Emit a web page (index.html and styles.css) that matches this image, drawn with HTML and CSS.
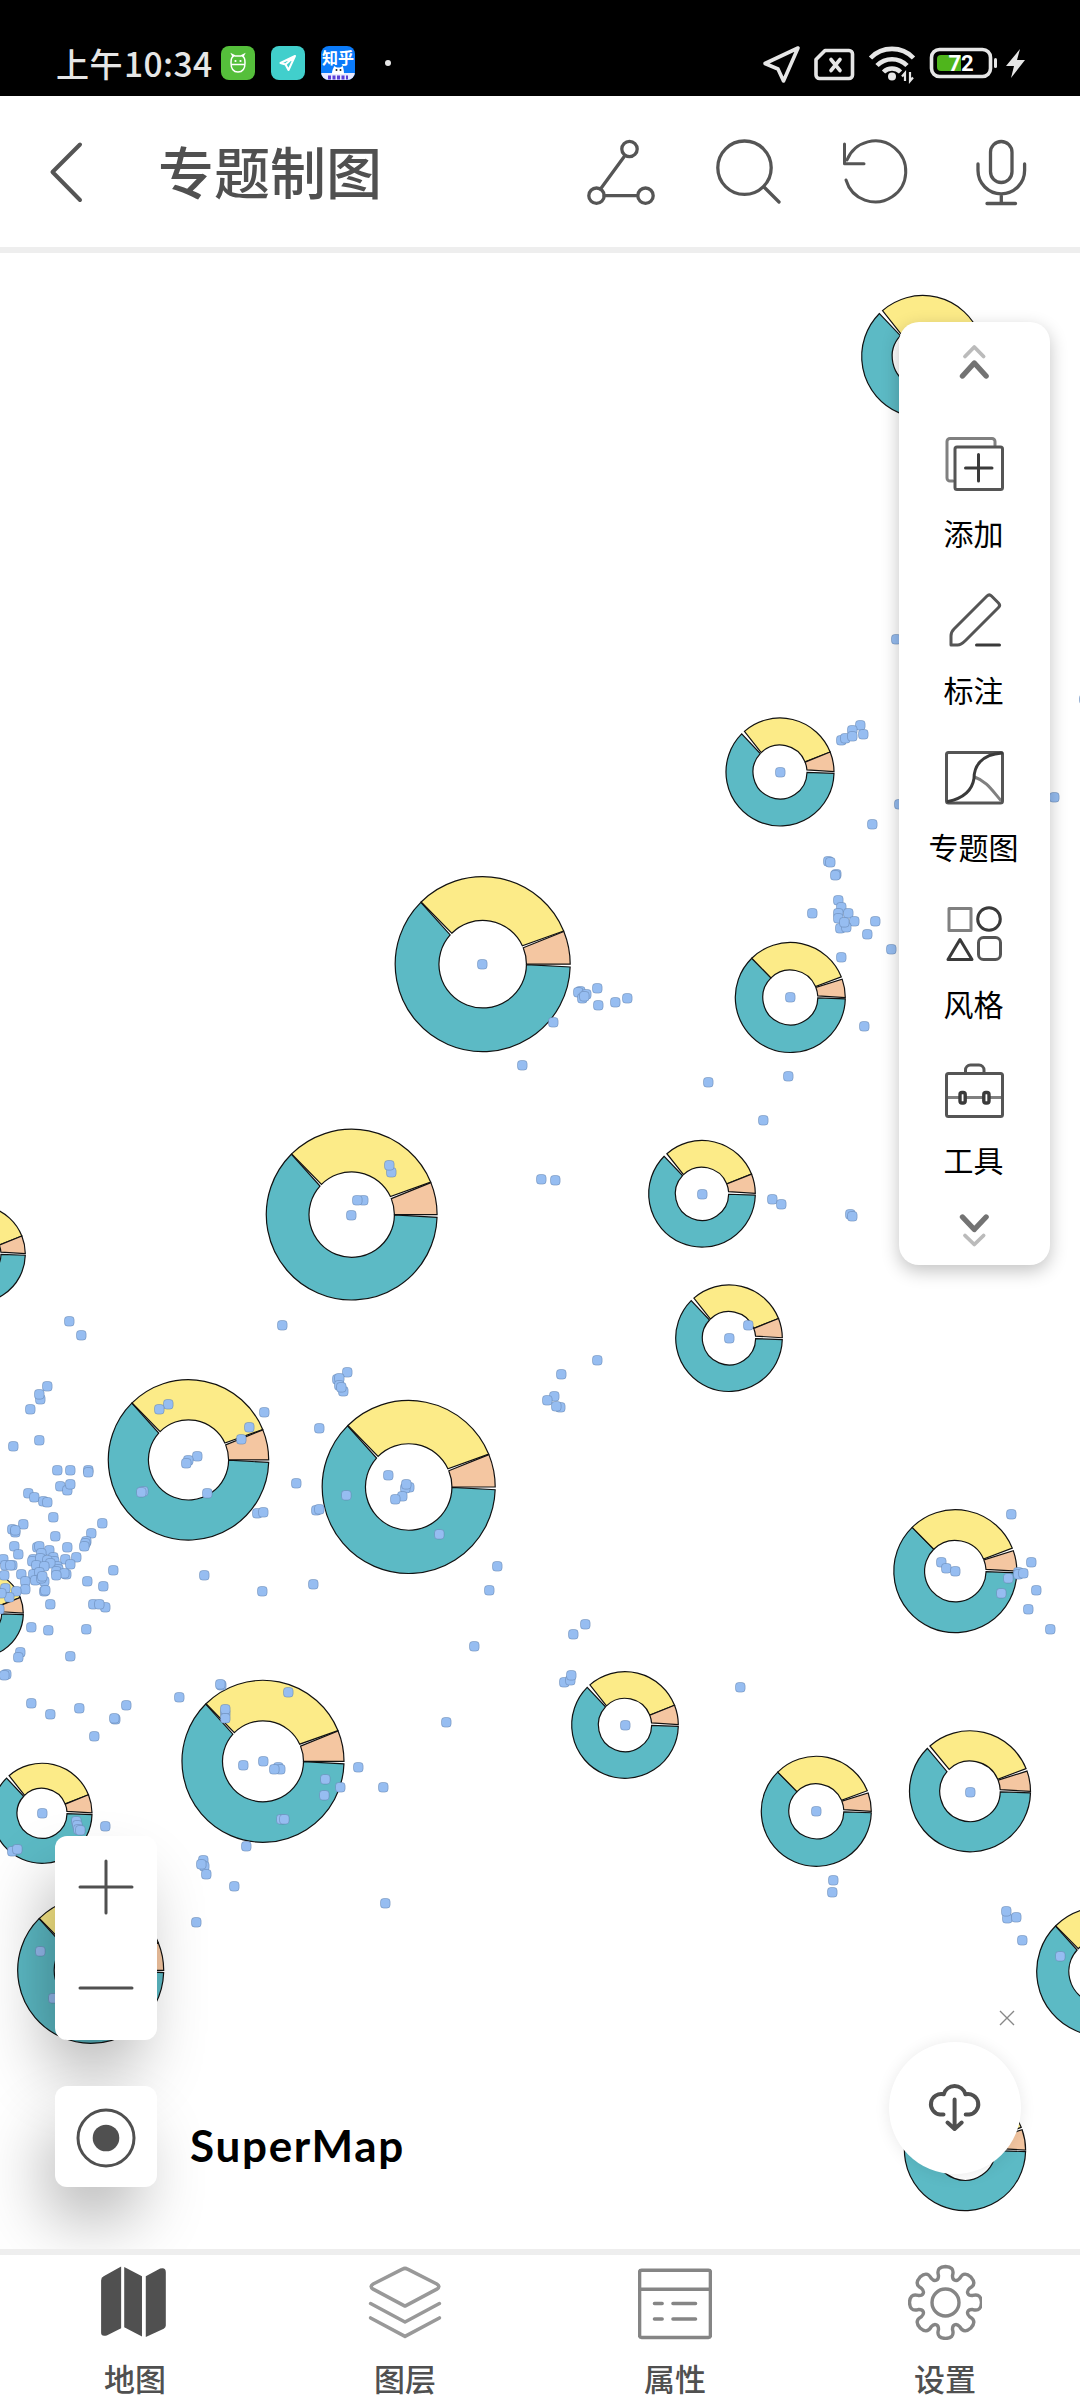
FILE: index.html
```html
<!DOCTYPE html>
<html lang="zh-CN">
<head>
<meta charset="utf-8">
<title>专题制图</title>
<link rel="stylesheet" href="styles.css">
</head>
<body>
<div class="status">
  <div class="status-left">
    <span class="clock"><span class="ampm">上午</span>10:34</span>
    <svg class="app-icon" viewBox="0 0 34 34"><rect width="34" height="34" rx="8" fill="#55bf3b"/><path d="M10 17c0-4 1-6 2-6.500l-1-2 3 1.500h6l3-1.500-1 2c1 .5 2 2.500 2 6.500 0 6-3 9-7 9s-7-3-7-9zM10 18.500h14" fill="none" stroke="#fff" stroke-width="1.500"/><circle cx="14.500" cy="15" r="1.100" fill="#fff"/><circle cx="19.500" cy="15" r="1.100" fill="#fff"/></svg>
    <svg class="app-icon" viewBox="0 0 34 34"><rect width="34" height="34" rx="8" fill="#41cfcc"/><path d="M24 10 9.500 17l5 1.500L17.500 24zM14.500 18.500 24 10" fill="none" stroke="#fff" stroke-width="2" stroke-linejoin="round"/></svg>
    <svg class="app-icon" viewBox="0 0 34 34"><clipPath id="zc"><rect width="34" height="34" rx="8"/></clipPath><g clip-path="url(#zc)"><rect width="34" height="34" fill="#0b7bfa"/><rect y="27" width="34" height="7" fill="#e9eaff"/><path d="M11 28c0-5 2-6 2-8l3 1.500h3l3-1.500c0 2 1 3 1 8z" fill="#fff"/><path d="M7 31.500h20" stroke="#5b3fd6" stroke-width="4" stroke-dasharray="3 1.500"/><circle cx="15.500" cy="24" r="1" fill="#222"/><circle cx="19.500" cy="24" r="1" fill="#222"/></g><text x="17" y="18" text-anchor="middle" class="zhihu">知乎</text></svg>
    <span class="more-dot"></span>
  </div>
  <svg class="status-right" viewBox="760 40 270 46">
    <g fill="none" stroke="#e6e6e6" stroke-width="3.600" stroke-linejoin="round" stroke-linecap="round">
      <path d="M798 48 765 63.500l13 5.500 5.500 12z"/>
      <path d="M825 50.500h24a3.500 3.500 0 0 1 3.500 3.500v21a3.500 3.500 0 0 1-3.500 3.500h-29.500a3.500 3.500 0 0 1-3.500-3.500V59.500z"/>
      <path d="m831 59.500 9 11M840 59.500l-9 11"/>
      <rect x="931.500" y="49.500" width="59" height="27" rx="8"/>
    </g>
    <g fill="none" stroke="#e6e6e6" stroke-width="4.600">
      <path d="M870.500 58a30 30 0 0 1 43 0M877 65.500a21 21 0 0 1 30 0M883.500 72a12 12 0 0 1 17 0"/>
    </g>
    <circle cx="892" cy="76.500" r="4" fill="#e6e6e6"/>
    <path d="M905 81v-8l-3 3.500M910 72v9l3-3.500" stroke="#e6e6e6" stroke-width="2.200" fill="none"/>
    <path d="M941 55h20v16h-20a4 4 0 0 1-4-4v-8a4 4 0 0 1 4-4z" fill="#4fb51c"/>
    <rect x="994" y="58" width="3" height="10" rx="1.500" fill="#e6e6e6"/>
    <path d="M1020 49 1006 66h8l-3 12 14-18h-8z" fill="#e6e6e6"/>
    <text x="961" y="71" text-anchor="middle" class="battery">72</text>
  </svg>
</div>

<header class="header">
  <svg class="back" viewBox="46 138 40 66"><path d="M80 143.500 52.500 171 80 199"/></svg>
  <h1 class="title">专题制图</h1>
  <svg class="actions" viewBox="580 130 460 84">
    <circle cx="629.500" cy="149" r="7.700"/><circle cx="596.500" cy="195.700" r="7.700"/><circle cx="645.500" cy="195.700" r="7.700"/>
    <path d="M625 155.500 600.500 189M604 195.700h33.500"/>
    <circle cx="744.500" cy="167.700" r="26.700"/><path d="m764 187 15 15"/>
    <path d="M846 180a30.500 30.500 0 1 0 1-20M844.500 144v19.700h19.500" class="thin"/>
    <rect x="990.500" y="141.500" width="21.500" height="41" rx="10.750"/><path d="M978 164v6.500a23.300 23.300 0 0 0 46.600 0V164M1001.300 194v9.500M987 203.500h28.500"/>
  </svg>
</header>

<main class="map">
  <svg class="map-canvas" id="map" viewBox="0 253 1080 1996"></svg>

  <aside class="tools">
    <svg class="chevrons" viewBox="954 340 40 42"><path class="far" d="m965 356.500 9.300-9.500 9.300 9.500"/><path class="near" d="m962.500 376 11.800-13 11.800 13"/></svg>
    <div class="tool-list">
      <div class="tool">
        <svg viewBox="944 434.500 60 60"><path class="mid" d="M953 481.500h-3a3 3 0 0 1-3-3V442a3 3 0 0 1 3-3h42a3 3 0 0 1 3 3v4"/><rect x="955" y="447.500" width="47.500" height="42.500" rx="2"/><path class="dark" d="M965.500 468.500h26.500M978.500 455v26.500"/></svg>
        <span>添加</span>
      </div>
      <div class="tool">
        <svg viewBox="944 591 60 60"><path d="M951 645v-9c0-3 1-5 3-7l33-33c1.500-1.500 3-1.500 4.500 0l7 7c1.500 1.500 1.500 3 0 4.500l-33 33c-2.500 2.500-5 4.500-8 4.500z"/><path class="dark" d="M976.500 645h23"/></svg>
        <span>标注</span>
      </div>
      <div class="tool">
        <svg viewBox="944 748 60 60"><path class="mid" d="M974.500 777c12 4 18 14 26 23"/><rect x="946.500" y="752.500" width="56" height="50.500" rx="2"/><path class="dark" d="M948 801.500c14-3 24-10 26-23 0-12 7-24 28-25.500"/></svg>
        <span>专题图</span>
      </div>
      <div class="tool">
        <svg viewBox="944 905 60 60"><rect class="mid" x="949" y="909.500" width="22" height="22"/><circle class="dark" cx="989" cy="920" r="11.300"/><path class="dark" d="m960 940.500 12 20h-24z"/><rect x="978.500" y="938.500" width="22" height="22" rx="5"/></svg>
        <span>风格</span>
      </div>
      <div class="tool">
        <svg viewBox="944 1062 60 60"><path class="mid" d="M948 1098.500h53"/><rect x="946.500" y="1074.500" width="56" height="43" rx="2"/><path d="M965.500 1074v-3a5 5 0 0 1 5-5h8.500a5 5 0 0 1 5 5v3"/><rect class="dark clasp" x="960" y="1093.500" width="5.200" height="10.500" rx="2"/><rect class="dark clasp" x="983.800" y="1093.500" width="5.200" height="10.500" rx="2"/></svg>
        <span>工具</span>
      </div>
    </div>
    <svg class="chevrons" viewBox="954 1208 40 42"><path class="near" d="m962.500 1214 11.800 12.500 11.800-12.500"/><path class="far" d="m965 1232.500 9.300 9 9.300-9"/></svg>
  </aside>

  <div class="zoom-box">
    <svg viewBox="0 0 102 204"><path d="M51 25v52M25 51h52M25 152h52"/></svg>
  </div>
  <div class="locate-box">
    <svg viewBox="0 0 102 101"><circle cx="51" cy="52" r="28"/><circle class="dot" cx="51" cy="52" r="13.300"/></svg>
  </div>
  <div class="brand">SuperMap</div>

  <svg class="close" viewBox="0 0 16 16"><path d="m1 1 14 14M15 1 1 15"/></svg>
  <div class="cloud-button">
    <svg viewBox="926 2080 57 55"><path d="M943.500 2114.500h-3.500a10.300 10.300 0 1 1 3.800-20.200 11.200 11.200 0 0 1 21.600 0 10.300 10.300 0 1 1 3.800 20.200h-3.500"/><path d="M954.600 2099.500v29M947.500 2122.500l7.100 6.500 7.100-6.500"/></svg>
  </div>
</main>

<nav class="tabs">
  <div class="tab active">
    <svg viewBox="99 2264 72 74"><path d="M102 2280q0-3 2.500-4l17-9.500v60l-14 7q-5.500 1.500-5.500-2.500zM124.500 2267l17.300 9v58.500l-17.300-9zM145.500 2276l14-7.500q5.500-1.500 5.500 3.500v52q0 2-2 3l-17.500 8z"/></svg>
    <span>地图</span>
  </div>
  <div class="tab">
    <svg class="light" viewBox="369 2264 72 74"><path d="m402.500 2269-28.500 14.500q-4 2.500 0 5l31 16.500 31-16.500q4-2.500 0-5L407.500 2269q-2.500-1.500-5 0zM371.500 2302.500l33.500 18 33.500-18M371.500 2316.500l33.500 18 33.500-18"/></svg>
    <span>图层</span>
  </div>
  <div class="tab">
    <svg viewBox="639 2265 72 74"><rect x="640.500" y="2271" width="69" height="65.500" rx="2"/><path d="M641 2289.500h68M655 2303.500h7.500M673 2303.500h22M655 2318.500h7.500M673 2318.500h22"/></svg>
    <span>属性</span>
  </div>
  <div class="tab">
    <svg viewBox="-37.500 -38.500 74 76"><path id="gear" d=""/><circle r="13.500"/></svg>
    <span>设置</span>
  </div>
</nav>
<script src="map.js"></script>
</body>
</html>
```
FILE: styles.css
```css
* { box-sizing: border-box; }

body {
  margin: 0;
  width: 1080px;
  height: 2400px;
  display: flex;
  flex-direction: column;
  overflow: hidden;
  background: #fff;
  font-family: "Noto Sans CJK SC", "Noto Sans", sans-serif;
}

svg { display: block; }

/* status bar */
.status {
  height: 96px;
  flex: none;
  background: #000;
  color: #e6e6e6;
  display: flex;
  justify-content: space-between;
  padding: 40px 50px 0 56px;
}
.status-left { display: flex; align-items: center; height: 46px; }
.clock {
  width: 157px;
  margin-right: 8px;
  font-size: 33.5px;
  font-weight: 500;
  line-height: 46px;
  letter-spacing: .45px;
  white-space: nowrap;
}
.ampm { font-size: 33px; margin-right: 1px; }
.app-icon { width: 34px; height: 34px; margin-right: 16px; }
.zhihu { font-size: 16px; font-weight: 700; fill: #fff; }
.more-dot { width: 6px; height: 6px; border-radius: 50%; background: #e6e6e6; margin-left: 14px; }
.status-right { width: 270px; height: 46px; }
.battery { font-family: Roboto, sans-serif; font-weight: 700; font-size: 22px; fill: #fff; }

/* header */
.header {
  height: 157px;
  flex: none;
  border-bottom: 6px solid #eee;
  display: flex;
  align-items: center;
  padding: 0 40px 0 46px;
}
.back { width: 40px; height: 66px; }
.title {
  margin: 0 auto 4px 72px;
  font-size: 56px;
  font-weight: 500;
  line-height: 80px;
  color: #505050;
}
.actions { width: 460px; height: 84px; }
.back, .actions { fill: none; stroke: #555; stroke-width: 3.3; stroke-linecap: round; stroke-linejoin: round; }
.back { stroke-width: 4; }
.thin { stroke-width: 3; }

/* map */
.map { position: relative; height: 1996px; flex: none; overflow: hidden; isolation: isolate; }
.map-canvas { position: relative; z-index: -2; width: 1080px; height: 1996px; }
.teal { fill: #5cbac5; }
.yellow { fill: #fceb88; }
.orange { fill: #f4c6a1; }
.slice { stroke: #111; stroke-width: 1.2; }
.point { fill: #96bdf1; stroke: #5f7ea8; stroke-opacity: .6; stroke-width: .8; }

.tools {
  position: absolute;
  left: 899px;
  top: 69px;
  width: 151px;
  height: 943px;
  padding: 18px 2px 12px 0;
  border-radius: 20px;
  background: #fff;
  box-shadow: 0 6px 18px rgba(0, 0, 0, .24);
  display: flex;
  flex-direction: column;
  align-items: center;
}
.chevrons { width: 40px; height: 42px; flex: none; fill: none; stroke-linecap: round; stroke-linejoin: round; }
.chevrons .near { stroke: #737373; stroke-width: 5.4; }
.chevrons .far { stroke: #bbb; stroke-width: 3.8; }
.tool-list { padding-top: 52px; display: flex; flex-direction: column; gap: 38.500px; margin-bottom: auto; }
.tool { height: 118.300px; display: flex; flex-direction: column; align-items: center; justify-content: space-between; }
.tool svg { width: 60px; height: 60px; fill: none; stroke: #555; stroke-width: 3; stroke-linecap: round; stroke-linejoin: round; }
.tool .mid { stroke: #808080; }
.tool .dark { stroke: #3a3a3a; }
.tool .clasp { stroke-width: 3.4; fill: #fff; }
.tool span { font-size: 30px; line-height: 40px; color: #000; white-space: nowrap; }

.zoom-box, .locate-box {
  position: absolute;
  left: 55px;
  width: 102px;
  border-radius: 12px;
  background: #fff;
}
.zoom-box::before, .locate-box::before {
  content: "";
  position: absolute;
  inset: 24px 24px 6px 6px;
  z-index: -1;
  border-radius: 12px;
  box-shadow: -4px 28px 66px 10px rgba(0, 0, 0, .3);
}
.zoom-box { top: 1583px; height: 204px; }
.locate-box { top: 1833px; height: 101px; }
.zoom-box svg, .locate-box svg { fill: none; stroke: #505050; stroke-width: 3; stroke-linecap: round; }
.locate-box .dot { fill: #505050; stroke: none; }

.brand {
  position: absolute;
  left: 190px;
  top: 1865px;
  font-family: Lato, sans-serif;
  font-weight: 700;
  font-size: 44px;
  line-height: 54px;
  letter-spacing: 1.700px;
  color: #000;
}

.close { position: absolute; left: 999px; top: 1757px; width: 16px; height: 16px; fill: none; stroke: #888; stroke-width: 1.4; }
.cloud-button {
  position: absolute;
  left: 888.600px;
  top: 1788.500px;
  width: 132px;
  height: 132px;
  border-radius: 50%;
  background: #fff;
  box-shadow: 0 1px 16px rgba(0, 0, 0, .09);
  display: flex;
  align-items: center;
  justify-content: center;
}
.cloud-button svg { width: 57px; height: 55px; fill: none; stroke: #505050; stroke-width: 4; stroke-linecap: round; stroke-linejoin: round; }

/* bottom tabs */
.tabs {
  height: 151px;
  flex: none;
  border-top: 6px solid #eee;
  display: grid;
  grid-template-columns: repeat(4, 1fr);
  background: #fff;
}
.tab { display: flex; flex-direction: column; align-items: center; padding-top: 9px; }
.tab svg { width: 74px; height: 76px; fill: none; stroke: #858585; stroke-width: 3.4; stroke-linecap: round; stroke-linejoin: round; }
.tab svg.light { stroke: #999; }
.tab.active svg { fill: #505050; stroke: none; }
.tab span { margin-top: 18px; font-size: 31px; font-weight: 500; line-height: 40px; color: #505050; }
```
FILE: map.js
```js
const NS = 'http://www.w3.org/2000/svg';
const map = document.getElementById('map');

// Each shape lists [outerStart, outerEnd, innerStart, innerEnd] in degrees per slice.
const SHAPES = {
  big: { teal: [1.8, 225, .5, 222], yellow: [225.3, 337.7, 225, 335], orange: [338, 360, 338, 360] },
  open: { teal: [1.5, 224.8, 1, 223], yellow: [228.8, 338.3, 226, 338], orange: [338.3, 359.5, 338.500, 355.5] },
  openGap: { teal: [1.5, 225.3, 1, 220.5], yellow: [228.5, 338, 226.500, 336.5], orange: [340.5, 360, 338.5, 357] },
  gap: { teal: [1.5, 225.5, 1, 225.5], yellow: [225.5, 338, 225.5, 336.5], orange: [340.5, 360, 338.5, 356.5] }
};

// [cx, cy, radius, shape]
const DONUTS = [
  [922.7, 356.5, 61, 'open'], [780, 772, 54, 'open'], [790.3, 997.5, 55, 'gap'],
  [482.7, 964.2, 87.5, 'big'], [351.7, 1214.6, 85.4, 'big'], [702, 1193.8, 53.3, 'open'],
  [729, 1338.2, 53.3, 'open'], [-23.4, 1254, 48.7, 'open'], [188.5, 1459.9, 80.2, 'big'],
  [408.7, 1487, 86.5, 'big'], [-20, 1613.5, 43.3, 'open'], [263, 1761.3, 81, 'big'],
  [42, 1813.3, 50, 'open'], [90.7, 1970.3, 73, 'big'], [955.3, 1571.2, 61.5, 'gap'],
  [970, 1791.3, 60.5, 'openGap'], [816.3, 1811.3, 55, 'gap'], [625, 1725, 53.3, 'open'],
  [1101, 1971.5, 64.3, 'big'], [965, 2150, 60.6, 'openGap']
];

const POINTS = `69,1321 81,1335 282,1325 47,1386 40,1399 39,1394 30,1409 39,1440 13,1446 57,1470 70,1470 88,1470
88,1472 60,1486 67,1490 70,1484 28,1493 34,1497 43,1501 47,1502 53,1517 23,1524 12,1529 15,1532 15,1530
102,1523 91,1533 55,1536 86,1541 85,1543 84,1546 14,1546 67,1547 37,1547 39,1546 18,1554 76,1557 3,1559 5,1565 12,1565
10,1565 49,1550 41,1553 53,1557 33,1559 32,1561 40,1558 54,1561 47,1560 65,1559 70,1564 57,1566 50,1563 36,1565
44,1566 58,1569 56,1571 66,1574 64,1573 56,1575 33,1574 39,1572 35,1580 44,1581 41,1578 42,1576 4,1575 21,1574
25,1581 25,1589 44,1591 45,1590 16,1591 5,1588 9,1597 1,1593 -1,1609 113,1570 87,1581 103,1586 50,1604 93,1604
105,1607 99,1604 31,1627 48,1630 86,1629 20,1652 18,1657 70,1656 6,1674 4,1675 31,1703 50,1714 79,1708
126,1705 115,1719 114,1718 94,1736 179,1697 221,1685 220,1684 288,1692 225,1713 225,1709 225,1718 204,1575 262,1591
313,1584 319,1428 296,1483 316,1510 319,1509 264,1412 249,1427 241,1439 257,1513 263,1512 168,1404 159,1409
197,1456 188,1460 186,1463 207,1493 143,1491 141,1492 391,1172 389,1165 363,1200 357,1200 351,1215 541,1179
555,1180 347,1372 337,1379 339,1378 339,1385 343,1391 341,1387 597,1360 561,1374 554,1396 547,1400 560,1407
556,1406 388,1475 409,1487 405,1488 406,1484 402,1496 395,1499 346,1495 439,1534 497,1566 489,1590 585,1624
573,1634 482,964 580,991 578,992 586,994 582,998 584,996 597,988 598,1005 615,1002 627,998 553,1022 522,1065
780,772 860,725 852,730 863,734 841,740 845,738 852,736 899,804 872,824 828,861 830,862 836,874 835,875 812,913
838,900 841,907 838,913 848,913 838,918 854,921 840,928 846,927 844,922 875,921 867,934 891,949 841,957
864,1026 790,997 788,1076 708,1082 763,1120 702,1194 772,1199 781,1204 850,1214 852,1216 748,1325 729,1338
896,639 1084,699 1054,797 263,1761 243,1765 278,1767 280,1769 274,1769 325,1779 340,1787 324,1795 358,1767
383,1787 281,1819 284,1819 246,1846 203,1860 204,1866 201,1864 206,1874 234,1886 196,1922 385,1903 42,1813
105,1826 76,1821 77,1825 78,1829 80,1830 12,1851 17,1849 40,1951 53,1998 1011,1514 941,1562 946,1568 955,1571
1031,1562 1018,1572 1018,1574 1023,1573 1008,1578 1001,1593 1036,1590 1028,1609 1050,1629 970,1792 1007,1918 1006,1911
1016,1917 1022,1940 1060,1956 625,1725 816,1811 564,1682 570,1680 571,1675 740,1687 446,1722 474,1646 833,1880 832,1892`;

function add(name, attrs) {
  const el = document.createElementNS(NS, name);
  for (const key in attrs) el.setAttribute(key, attrs[key]);
  map.appendChild(el);
}

function at(cx, cy, r, deg) {
  const a = deg * Math.PI / 180;
  return (cx + r * Math.cos(a)).toFixed(2) + ' ' + (cy + r * Math.sin(a)).toFixed(2);
}

for (const [cx, cy, r, shape] of DONUTS) {
  const h = r / 2;
  for (const [colour, [o1, o2, i1, i2]] of Object.entries(SHAPES[shape])) {
    const large = o2 - o1 > 180 ? 1 : 0;
    add('path', {
      class: 'slice ' + colour,
      d: `M${at(cx, cy, r, o1)}A${r} ${r} 0 ${large} 1 ${at(cx, cy, r, o2)}` +
         `L${at(cx, cy, h, i2)}A${h} ${h} 0 ${large} 0 ${at(cx, cy, h, i1)}Z`
    });
  }
}

for (const pair of POINTS.split(/\s+/)) {
  const [x, y] = pair.split(',').map(Number);
  add('rect', { class: 'point', x: x - 4.5, y: y - 4.5, width: 9.6, height: 9.6, rx: 3.2 });
}

// Gear outline: eight rounded teeth on a smooth closed curve.
let gear = '';
for (let i = 0; i < 8; i++) {
  const p = (r, d) => at(0, 0, r, i * 45 - 90 + d);
  gear += (i ? 'L' : 'M') + p(28, -14.5) +
    'C' + p(35, -15) + ' ' + p(36, -8) + ' ' + p(36, 0) +
    'C' + p(36, 8) + ' ' + p(35, 15) + ' ' + p(28, 14.5) +
    'C' + p(23, 17) + ' ' + p(23, 28) + ' ' + p(28, 30.5);
}
document.getElementById('gear').setAttribute('d', gear + 'Z');
```
